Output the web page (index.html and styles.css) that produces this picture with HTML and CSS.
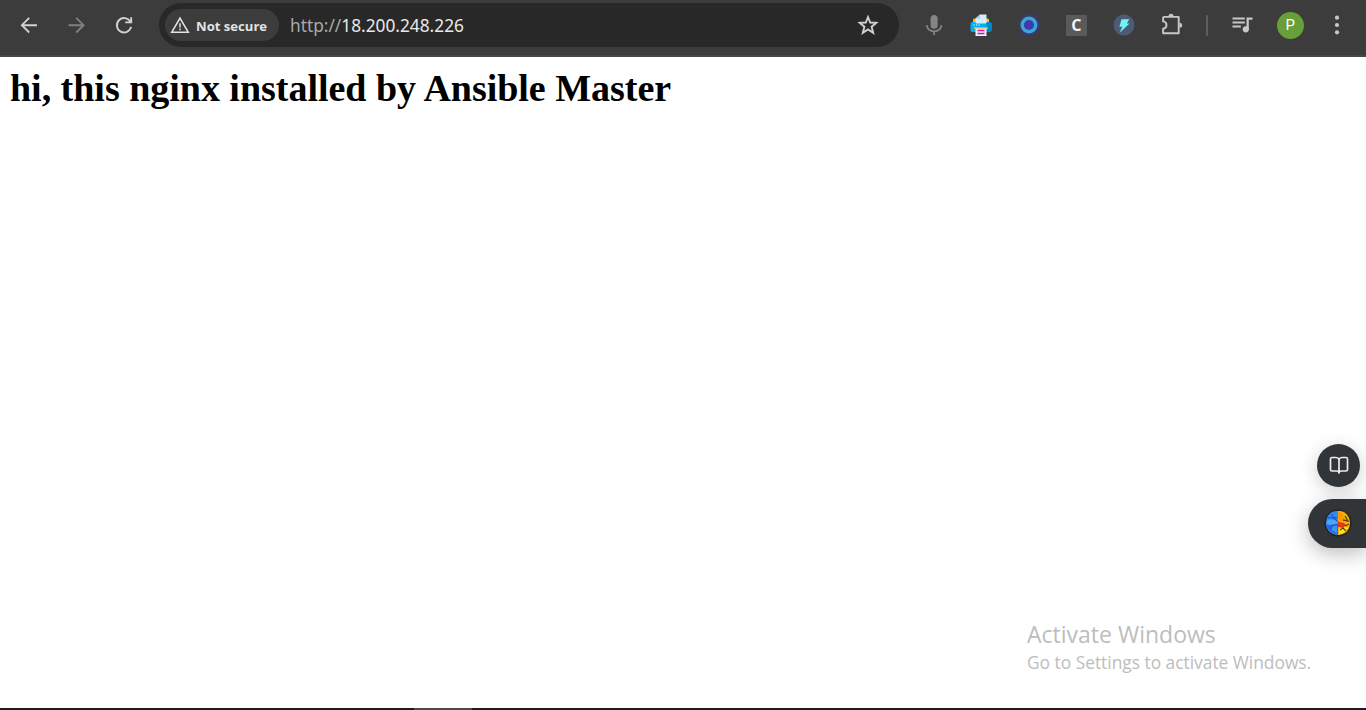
FILE: index.html
```html
<!DOCTYPE html>
<html lang="en">
<head>
<meta charset="utf-8">
<title>18.200.248.226</title>
<link rel="stylesheet" href="styles.css">
</head>
<body>
<div class="browser">
  <header class="toolbar">
    <nav class="group">
      <span class="slot"><svg width="24" height="24" viewBox="0 0 24 24" class="line light"><path d="M20 12.200H5.200M12.200 4.900 4.900 12.200l7.300 7.300"/></svg></span>
      <span class="slot"><svg width="24" height="24" viewBox="0 0 24 24" class="line dim"><path d="M3.500 12.200h14.800M11.300 4.900l7.300 7.300-7.300 7.300"/></svg></span>
      <span class="slot"><svg width="24" height="24" viewBox="0 0 24 24" class="line light"><path d="M18.300 8.600A7.200 7.200 0 1 0 19.100 13.900M19.200 4.200v5.200h-6"/></svg></span>
    </nav>
    <div class="address">
      <div class="security">
        <svg width="20" height="18" viewBox="0 0 20 18"><path d="M10 2.100 18.200 16.200H1.800Z" fill="none" stroke="#e3e3e3" stroke-width="1.600"/><path d="M10 7.200v4.300M10 12.600v1.600" stroke="#e3e3e3" stroke-width="1.500"/></svg>
        <span class="security-label">Not secure</span>
      </div>
      <div class="url"><span class="scheme">http://</span><span class="host">18.200.248.226</span></div>
      <svg class="star" width="22" height="22" viewBox="0 0 22 22"><path d="M11 3 13.200 8.500 19.300 8.900 14.600 12.700 16.200 18.800 11 15.500 5.800 18.800 7.400 12.700 2.700 8.900 8.800 8.500Z" fill="none" stroke="#d0d0d0" stroke-width="1.900"/></svg>
    </div>
    <div class="group extensions">
      <span class="slot"><svg width="22" height="24" viewBox="0 0 22 24"><rect x="7.600" y="2" width="7" height="13.800" rx="3.500" fill="#858585"/><path d="M3.700 12.200c.5 4 3.400 6.200 7.400 6.200s6.900-2.200 7.400-6.200M11.100 18v4.200" fill="none" stroke="#858585" stroke-width="1.700"/></svg></span>
      <span class="slot"><svg class="printer" width="22" height="22" viewBox="0 0 22 22"><rect x="3" y="4.500" width="16" height="6" rx="1.500" fill="#ffc10e"/><path d="M5.500 4.500 10 .5h6.500V8.500h-11Z" fill="#d5edff"/><path d="M5.500 4.500 10 .5v4Z" fill="#a2d4f5"/><rect x=".5" y="8" width="21" height="10" rx="2" fill="#00aff0"/><path d="M16.500 8h3q2 0 2 2v6q0 2-2 2h-3Z" fill="#0087c5"/><path d="M5 8h12l-1.500 1.500h-9Z" fill="#d5edff"/><path d="M3.500 11h1.200M6 11h1.200M8.500 11h1.200" stroke="#fff"/><path d="M4 13.300h14v1.500H4z" fill="#ffc10e"/><path d="M5.500 14.500h11V22h-11z" fill="#e3f3ff"/><path d="M7.500 16.500h7M7.500 19.500h7" stroke="#e80ca7" stroke-width="1.700"/></svg></span>
      <span class="slot"><svg width="22" height="22" viewBox="0 0 22 22"><circle cx="11" cy="11" r="10.200" fill="none" stroke="#3f35a0" stroke-width=".9"/><circle cx="11" cy="11" r="6.800" fill="#403bad" stroke="#38a5df" stroke-width="3.400"/></svg></span>
      <span class="slot"><span class="letter-tile">C</span></span>
      <span class="slot"><svg width="22" height="22" viewBox="0 0 22 22"><circle cx="11" cy="11" r="10.500" fill="#4d5b77"/><path d="M8.500 5.200h7.800l-2.500 4.300h2.700L6.700 18.700l2.500-6H6.400Z" fill="#71f4f7"/></svg></span>
      <span class="slot"><svg width="24" height="24" viewBox="0 0 24 24"><path d="M4.200 3.900H18.700V20.300H3.100V15.800C5.200 15.500 6.500 14 6.500 12S5.200 8.700 3.100 8.400V5Q3.100 3.900 4.200 3.900Z" fill="none" stroke="#c7c7c7" stroke-width="1.900" stroke-linejoin="round"/><path d="M8.500 3.500a2.500 2.700 0 0 1 5 0ZM19.500 9.700a2.700 2.500 0 0 1 0 5Z" fill="#c7c7c7"/></svg></span>
    </div>
    <span class="divider"></span>
    <div class="group">
      <span class="slot"><svg width="22" height="18" viewBox="0 0 22 18"><path d="M1.500 2.500h12.300M1.500 6.500h12.300M1.500 10.500h8.300" stroke="#c7c7c7" stroke-width="2"/><path d="M15.500 1.500h6v2.200h-3.700v9.500h-2.300Z" fill="#c7c7c7"/><circle cx="14.800" cy="13.300" r="3.100" fill="#c7c7c7"/></svg></span>
      <span class="slot"><span class="avatar">P</span></span>
      <span class="slot"><svg width="6" height="22" viewBox="0 0 6 22" fill="#c7c7c7"><circle cx="3" cy="3.700" r="2.100"/><circle cx="3" cy="11" r="2.100"/><circle cx="3" cy="18.300" r="2.100"/></svg></span>
    </div>
  </header>
  <main class="page">
    <h1 class="message">hi, this nginx installed by Ansible Master</h1>
  </main>
  <footer class="taskbar"><span class="active-task"></span></footer>
  <aside class="floating">
    <span class="reader"><svg width="22" height="22" viewBox="0 0 22 22"><path d="M11 5.500C10.500 4 9 3.500 7.500 3.500H4Q2.500 3.500 2.500 5V15.500Q2.500 17 4 17H8.500C10 17 11 17.500 11 19 11 17.500 12 17 13.500 17H18Q19.500 17 19.500 15.500V5Q19.500 3.500 18 3.500H14.500C13 3.500 11.500 4 11 5.500V19" fill="none" stroke="#eeece7" stroke-width="1.700" stroke-linejoin="round"/></svg></span>
    <span class="assistant"><svg width="30" height="30" viewBox="0 0 30 30"><circle cx="15" cy="15" r="13.500" fill="#24221f"/><path d="M15 3C8 2 3 8 3 15s5 12 12 12Z" fill="#3489fa"/><path d="M15 3c7-1 12 5 12 12s-5 12-12 12Z" fill="#f6b305"/><path d="M16 19l5-1 4 2c-2 4-5 6-9 6Z" fill="#ffe01f"/><path d="M15 13c2 2 4 1 6 2l2 2-3 3-5-1Z" fill="#e23a16"/><path d="M15 4l5 2 1 5-3 2-3-3Z" fill="#ff9400"/><path d="M3.500 14c3-4 8-3 11.500 1-3 1-7 2-11 1Z" fill="#47a7ff"/><path d="M4 17c3 1 7-1 11-1v10C9 26 5 22 4 17Z" fill="#2665dc"/><path d="M8 22c0-3 2-5 6-5v8Z" fill="#3c96fa"/><path d="M22 8l3 5-5-1M26 16l-4 2M17 22l3-2 3 3" fill="none" stroke="#5b3b18" stroke-width="1.300"/><path d="M5 10c3-1 7 0 9 3M9 6c0 3 2 4 5 4M8 22c0-3 2-5 6-5" fill="none" stroke="#1b4dac" stroke-width="1"/></svg></span>
  </aside>
  <aside class="activation">
    <div class="activation-title">Activate Windows</div>
    <div class="activation-text">Go to Settings to activate Windows.</div>
  </aside>
</div>
</body>
</html>
```
FILE: styles.css
```css
* { box-sizing: border-box; }
body { margin: 0; background: #fff; }
svg { display: block; flex: none; }
.browser { position: relative; display: flex; flex-direction: column; height: 710px; overflow: hidden; font-family: "Open Sans", "Noto Sans", sans-serif; }
.toolbar { display: flex; flex: none; align-items: center; height: 57px; padding: 0 5.5px 7px; background: linear-gradient(#3c3c3c 55px, #474747 55px); }
.group { display: flex; }
.slot { display: flex; flex: none; align-items: center; justify-content: center; width: 47.5px; height: 30px; }
.line { fill: none; stroke-width: 1.9; }
.light { stroke: #d0d0d0; }
.dim { stroke: #808080; }
.address { display: flex; flex: none; align-items: center; width: 740px; height: 44px; margin-left: 11px; padding: 0 20px 0 6px; border-radius: 22px; background: #282828; }
.security { display: flex; align-items: center; width: 114px; height: 32px; padding-left: 5px; border-radius: 16px; background: #3c3c3c; }
.security-label { margin-left: 6px; padding-top: 1px; color: #e3e3e3; font-size: 13.1px; font-weight: 700; line-height: 18px; white-space: nowrap; }
.url { margin-left: 11px; padding-top: 2px; font-family: "Noto Sans", sans-serif; font-size: 17.3px; line-height: 24px; white-space: nowrap; }
.scheme { color: #aaa; }
.host { color: #e8e8e8; }
.star { margin-left: auto; }
.extensions { margin-left: 11.5px; }
.printer { margin-right: 1px; }
.letter-tile { display: flex; align-items: center; justify-content: center; width: 21px; height: 21px; margin-right: 1px; background: #5a5a5a; color: #f4f4f4; font: bold 16px/21px "Open Sans", sans-serif; }
.divider { flex: none; width: 2px; height: 21px; margin: 0 10.5px; border-radius: 1px; background: #5e5e5e; }
.avatar { display: flex; align-items: center; justify-content: center; width: 27px; height: 27px; margin: 1px 0 0 1px; border-radius: 50%; background: #689f38; color: #fff; font: 15px/27px Roboto, sans-serif; }
.page { flex: 1; padding: 10px; }
.message { margin: 0; color: #000; font: bold 38px/43px "Liberation Serif", serif; letter-spacing: -.02px; white-space: nowrap; }
.taskbar { flex: none; height: 2px; padding-left: 414px; background: #1d1b1d; }
.active-task { display: block; width: 58px; height: 2px; background: #4b4a4b; }
.floating { position: absolute; top: 444px; right: 0; display: flex; flex-direction: column; align-items: flex-end; gap: 12px; }
.reader { display: flex; align-items: center; justify-content: center; width: 43px; height: 43px; margin-right: 6px; padding: 0 0 1px; border-radius: 50%; background: #313538; box-shadow: 0 4px 18px rgba(0, 0, 0, .2); }
.assistant { display: flex; align-items: center; width: 58px; height: 49px; padding: 0 0 1px 14.5px; border-radius: 25px 0 0 25px; background: #313538; box-shadow: 0 6px 20px rgba(0, 0, 0, .26); }
.activation { position: absolute; top: 619px; left: 1027px; color: #bdbdbd; white-space: nowrap; }
.activation-title { font-size: 23px; line-height: 31px; }
.activation-text { font-size: 17.35px; line-height: 25px; }
```
